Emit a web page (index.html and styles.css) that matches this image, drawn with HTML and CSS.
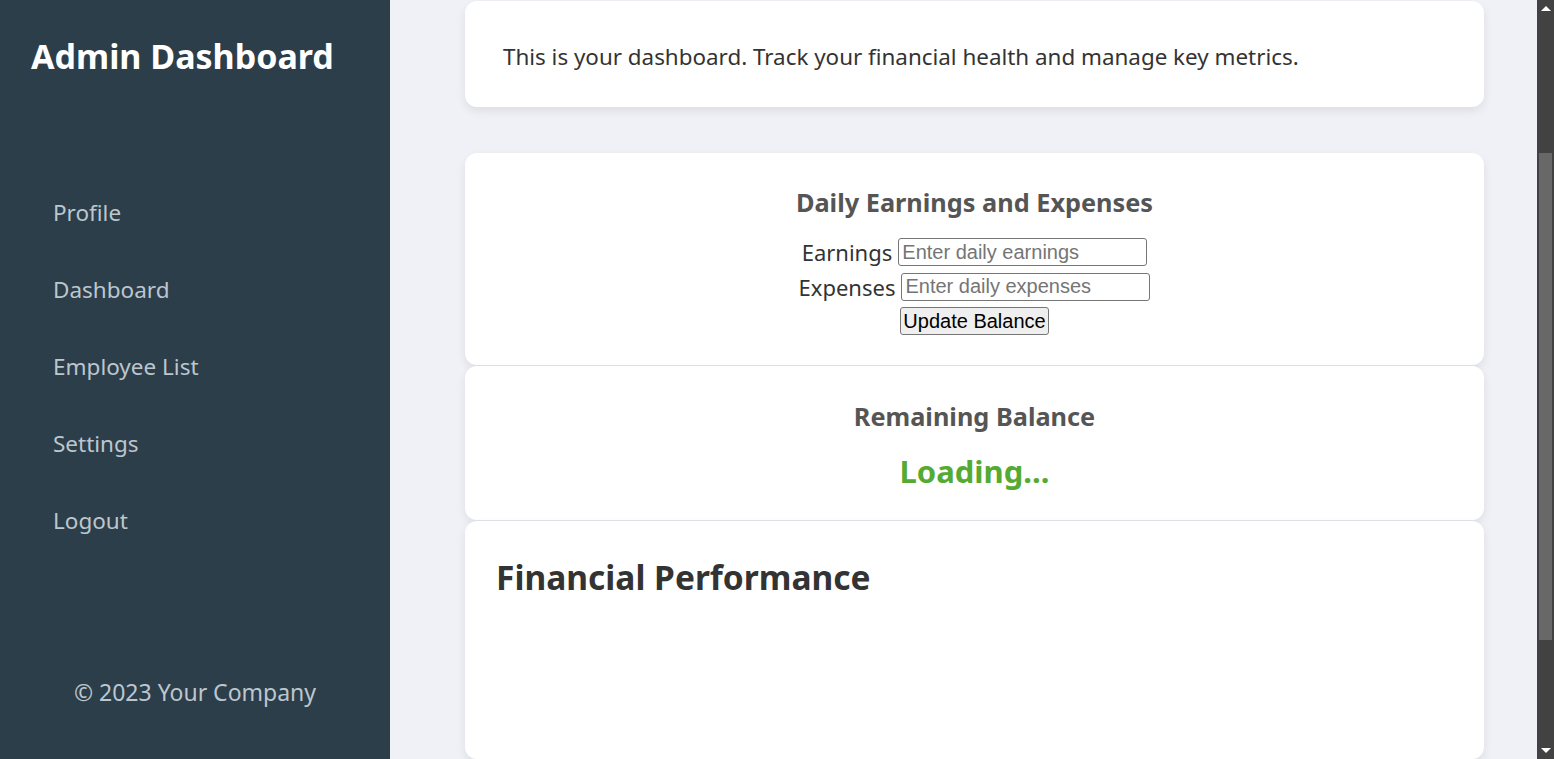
FILE: index.html
```html
<!DOCTYPE html>
<html lang="en">
<head>
<meta charset="utf-8">
<title>Admin Dashboard</title>
<link rel="stylesheet" href="styles.css">
</head>
<body>
<div class="layout">
  <aside class="sidebar">
    <h1 class="brand">Admin Dashboard</h1>
    <nav class="nav">
      <a class="nav-link" href="#">Profile</a>
      <a class="nav-link" href="#">Dashboard</a>
      <a class="nav-link" href="#">Employee List</a>
      <a class="nav-link" href="#">Settings</a>
      <a class="nav-link" href="#">Logout</a>
    </nav>
    <footer class="side-footer">© 2023 Your Company</footer>
  </aside>
  <main class="main">
    <section class="card intro">
      <p class="intro-text">This is your dashboard. Track your financial health and manage key metrics.</p>
    </section>
    <section class="card daily">
      <h3 class="card-title">Daily Earnings and Expenses</h3>
      <div class="field"><label class="field-label" for="earn">Earnings</label><input class="field-input" id="earn" type="text" placeholder="Enter daily earnings"></div>
      <div class="field"><label class="field-label" for="exp">Expenses</label><input class="field-input" id="exp" type="text" placeholder="Enter daily expenses"></div>
      <div class="field"><button class="btn" type="button">Update Balance</button></div>
    </section>
    <section class="card balance">
      <h3 class="card-title">Remaining Balance</h3>
      <div class="balance-value">Loading...</div>
    </section>
    <section class="card perf">
      <h2 class="perf-title">Financial Performance</h2>
    </section>
  </main>
  <div class="scrollbar">
    <div class="sb-arrow sb-up"></div>
    <div class="sb-track"><div class="sb-thumb"></div></div>
    <div class="sb-arrow sb-down"></div>
  </div>
</div>
</body>
</html>
```
FILE: styles.css
```css
html, body {
  margin: 0;
  padding: 0;
  height: 759px;
  overflow: hidden;
}
body {
  font-family: "Segoe UI", "Noto Sans", "Open Sans", sans-serif;
  background-color: #f0f1f6;
  color: #333;
}
.layout {
  display: grid;
  grid-template-columns: 390px minmax(0, 1fr) 17px;
  height: 759px;
}
.sidebar {
  background-color: #2c3e4a;
  display: flex;
  flex-direction: column;
}
.brand {
  margin: 0;
  padding: 34px 0 0 31px;
  color: #fff;
  font-size: 34px;
  font-weight: 700;
  line-height: 44px;
}
.nav {
  display: flex;
  flex-direction: column;
  margin-top: 120px;
  padding-left: 53px;
  gap: 47px;
}
.nav-link {
  color: #bdc6ce;
  text-decoration: none;
  font-size: 22.5px;
  line-height: 30px;
}
.side-footer {
  margin-top: auto;
  margin-bottom: 52px;
  text-align: center;
  color: #bdc6ce;
  font-size: 23px;
  line-height: 30px;
}
.main {
  padding: 1px 53px 0 75px;
  display: flex;
  flex-direction: column;
  min-width: 0;
}
.card {
  background-color: #fff;
  border-radius: 12px;
  box-shadow: 0 4px 10px rgba(0,0,0,0.08);
}
.intro {
  height: 106px;
  box-sizing: border-box;
  display: flex;
  align-items: center;
  padding: 4px 38px 0;
  margin-bottom: 46px;
}
.intro-text {
  margin: 0;
  font-size: 22.4px;
  color: #333;
}
.daily {
  height: 212px;
  box-sizing: border-box;
  padding-top: 29px;
  text-align: center;
  margin-bottom: 1px;
}
.daily .card-title {
  margin-bottom: 13px;
}
.card-title {
  margin: 0 0 6px;
  font-size: 25.3px;
  line-height: 40px;
  font-weight: 700;
  color: #555;
}
.field {
  display: flex;
  justify-content: center;
  align-items: center;
  gap: 6px;
  height: 34.5px;
}
.field-label {
  font-size: 22px;
  color: #333;
}
.field-input {
  width: 249px;
  height: 28px;
  box-sizing: border-box;
  border: 1px solid #767676;
  border-radius: 3px;
  font-family: "Liberation Sans", Arial, sans-serif;
  font-size: 20px;
  padding: 0 3px;
}
.field-input::placeholder {
  color: #757575;
}
.btn {
  height: 28px;
  font-family: "Liberation Sans", Arial, sans-serif;
  font-size: 20px;
  padding: 0 2px;
  background-color: #efefef;
  border: 1px solid #767676;
  border-radius: 3px;
  color: #000;
}
.balance {
  height: 154px;
  box-sizing: border-box;
  padding-top: 30px;
  text-align: center;
  margin-bottom: 1px;
}
.balance-value {
  font-size: 31px;
  font-weight: 700;
  color: #55aa33;
  line-height: 44px;
  margin-top: 13px;
}
.perf {
  flex: 1;
  padding: 34px 32px 0 31px;
}
.perf-title {
  margin: 0;
  font-size: 33.5px;
  line-height: 44px;
  font-weight: 700;
  color: #333;
}
.scrollbar {
  background-color: #424242;
  display: flex;
  flex-direction: column;
  height: 759px;
}
.sb-arrow {
  height: 17px;
  flex: none;
  display: flex;
  align-items: center;
  justify-content: center;
}
.sb-up::before {
  content: "";
  border-left: 5px solid transparent;
  border-right: 5px solid transparent;
  border-bottom: 5px solid #ffffff;
}
.sb-down::before {
  content: "";
  border-left: 5px solid transparent;
  border-right: 5px solid transparent;
  border-top: 5px solid #ffffff;
}
.sb-track {
  flex: 1;
  padding-top: 136px;
}
.sb-thumb {
  margin: 0 2px;
  height: 487px;
  background-color: #686868;
}
```
